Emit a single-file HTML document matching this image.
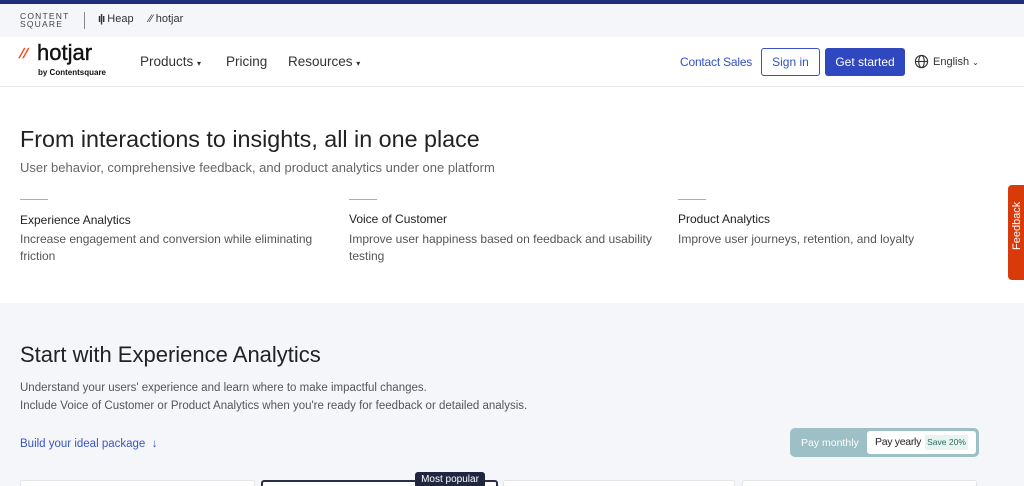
<!DOCTYPE html>
<html><head><meta charset="utf-8"><style>
*{margin:0;padding:0;box-sizing:border-box}
html,body{width:1024px;height:486px;overflow:hidden}
body{font-family:"Liberation Sans",sans-serif;background:#fff;position:relative;color:#262626}
.a{position:absolute;white-space:nowrap}
</style></head><body>
<div class="a" style="left:0;top:0;width:1024px;height:4px;background:#1f2e7a"></div>
<div class="a" style="left:0;top:4px;width:1024px;height:33px;background:#f4f6fa"></div>
<div class="a" style="left:20px;top:12px;font-size:8.5px;letter-spacing:1.2px;line-height:8px;color:#444">CONTENT<br>SQUARE</div>
<div class="a" style="left:84px;top:12px;width:1px;height:17px;background:#888"></div>
<div class="a" style="left:98px;top:13px;font-size:11px;color:#333"><b style="letter-spacing:-1px">ı|ı</b> Heap</div>
<div class="a" style="left:149px;top:13px;font-size:11px;color:#333">⁄⁄ hotjar</div>
<div class="a" style="left:0;top:86px;width:1024px;height:1px;background:#e8e8e8"></div>
<div class="a" style="left:20px;top:45px;font-size:14px;color:#f24e1e;font-weight:bold;transform:skewX(-20deg)">//</div>
<div class="a" style="left:37px;top:40px;font-size:22px;color:#111;-webkit-text-stroke:0.4px #111">hotjar</div>
<div class="a" style="left:38px;top:68px;font-size:8px;font-weight:bold;color:#111">by Contentsquare</div>
<div class="a" style="left:140px;top:54px;font-size:13.5px;color:#333">Products <span style="font-size:8px">▾</span></div>
<div class="a" style="left:226px;top:54px;font-size:13.5px;color:#333">Pricing</div>
<div class="a" style="left:288px;top:54px;font-size:13.5px;color:#333">Resources <span style="font-size:8px">▾</span></div>
<div class="a" style="left:680px;top:55px;font-size:12px;color:#3350c4;letter-spacing:-0.2px">Contact Sales</div>
<div class="a" style="left:761px;top:48px;width:59px;height:28px;border:1px solid #3a52c4;border-radius:3px;font-size:12px;color:#3350c4;text-align:center;line-height:26px">Sign in</div>
<div class="a" style="left:825px;top:48px;width:80px;height:28px;background:#3048bf;border-radius:3px;font-size:12px;color:#fff;text-align:center;line-height:28px">Get started</div>
<svg class="a" style="left:914px;top:54px" width="15" height="15" viewBox="0 0 16 16" fill="none" stroke="#333" stroke-width="1.2"><circle cx="8" cy="8" r="6.5"/><ellipse cx="8" cy="8" rx="3" ry="6.5"/><path d="M1.5 8h13"/></svg>
<div class="a" style="left:933px;top:56px;font-size:11px;color:#333">English <span style="font-size:8px">⌄</span></div>
<div class="a" style="left:20px;top:126px;font-size:23.3px;color:#222">From interactions to insights, all in one place</div>
<div class="a" style="left:20px;top:160px;font-size:13px;color:#666">User behavior, comprehensive feedback, and product analytics under one platform</div>
<div class="a" style="left:20px;top:199px;width:28px;height:1px;background:#c9a58a"></div>
<div class="a" style="left:349px;top:199px;width:28px;height:1px;background:#c9a58a"></div>
<div class="a" style="left:678px;top:199px;width:28px;height:1px;background:#c9a58a"></div>
<div class="a" style="left:20px;top:212px;font-size:12px;color:#222;line-height:17px">Experience Analytics</div>
<div class="a" style="left:20px;top:231px;font-size:12px;color:#555;line-height:17px">Increase engagement and conversion while eliminating<br>friction</div>
<div class="a" style="left:349px;top:212px;font-size:12px;color:#222">Voice of Customer</div>
<div class="a" style="left:349px;top:231px;font-size:12px;color:#555;line-height:17px">Improve user happiness based on feedback and usability<br>testing</div>
<div class="a" style="left:678px;top:212px;font-size:12px;color:#222">Product Analytics</div>
<div class="a" style="left:678px;top:231px;font-size:12px;color:#555;line-height:17px">Improve user journeys, retention, and loyalty</div>
<div class="a" style="left:1008px;top:185px;width:20px;height:95px;background:#d83a0a;border-radius:4px 0 0 4px"></div>
<div class="a" style="left:1011px;top:250px;font-size:11px;color:#fff;transform:rotate(-90deg);transform-origin:0 0">Feedback</div>
<div class="a" style="left:0;top:303px;width:1024px;height:183px;background:#f5f6fa"></div>
<div class="a" style="left:20px;top:342px;font-size:22px;color:#222">Start with Experience Analytics</div>
<div class="a" style="left:20px;top:379px;font-size:11.5px;color:#555;line-height:18px">Understand your users' experience and learn where to make impactful changes.<br>Include Voice of Customer or Product Analytics when you're ready for feedback or detailed analysis.</div>
<div class="a" style="left:20px;top:438px;font-size:11.5px;color:#3a55c4">Build your ideal package &nbsp;↓</div>
<div class="a" style="left:790px;top:428px;width:189px;height:29px;background:#9dbfc6;border-radius:5px"></div>
<div class="a" style="left:801px;top:437px;font-size:10.5px;color:#fff">Pay monthly</div>
<div class="a" style="left:867px;top:431px;width:109px;height:23px;background:#fff;border-radius:3px"></div>
<div class="a" style="left:875px;top:436px;font-size:10.5px;color:#222;letter-spacing:-0.3px">Pay yearly</div>
<div class="a" style="left:925px;top:435px;width:43px;height:15px;background:#e8f4f2;border-radius:2px;font-size:8.5px;color:#2a6a5a;text-align:center;line-height:15px">Save 20%</div>
<div class="a" style="left:20px;top:480px;width:235px;height:10px;background:#fff;border:1px solid #e2e4ea;border-radius:3px"></div>
<div class="a" style="left:261px;top:480px;width:237px;height:10px;background:#fff;border:2px solid #2b2f45;border-radius:3px"></div>
<div class="a" style="left:415px;top:472px;width:70px;height:16px;background:#212640;border-radius:3px;font-size:10px;color:#fff;text-align:center;line-height:16px">Most popular</div>
<div class="a" style="left:503px;top:480px;width:232px;height:10px;background:#fff;border:1px solid #e2e4ea;border-radius:3px"></div>
<div class="a" style="left:742px;top:480px;width:235px;height:10px;background:#fff;border:1px solid #e2e4ea;border-radius:3px"></div>
</body></html>
